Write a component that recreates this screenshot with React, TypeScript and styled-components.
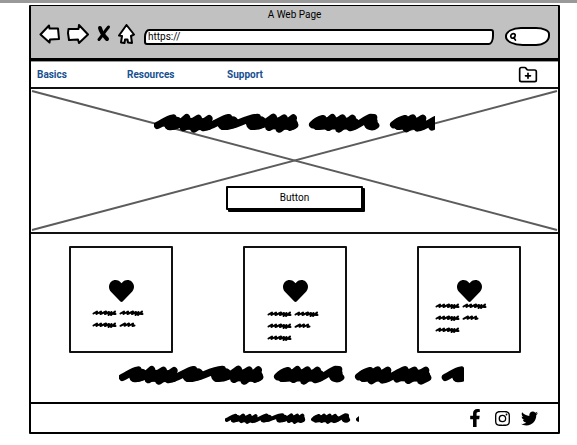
import React from "react";
import styled, { createGlobalStyle } from "styled-components";
import { FaHeart, FaFacebookF, FaTwitter } from "react-icons/fa";
import { BsInstagram } from "react-icons/bs";
import { FolderPlus } from "lucide-react";

const GlobalStyle = createGlobalStyle`
  * { box-sizing: border-box; }
  body {
    margin: 0;
    background: #fff;
    color: #000;
    font-family: Roboto, "Liberation Sans", sans-serif;
    font-size: 10px;
    line-height: 16px;
  }
`;

const Page = styled.div`
  border-top: 3px solid #999;
  padding: 2px 17px 11px 29px;
`;

const Frame = styled.div`
  border: 2px solid #000;
  border-top-width: 1px;
  border-radius: 1px;
`;

const Chrome = styled.header`
  background: #c1c1c1;
  border-bottom: 2px solid #000;
  padding-bottom: 9px;
`;

const Title = styled.h1`
  margin: 0;
  font-size: 10px;
  line-height: 18px;
  font-weight: 400;
  text-align: center;
`;

const Toolbar = styled.div`
  display: flex;
  align-items: center;
  gap: 7px;
  height: 25px;
  padding: 0 8px 0 8px;
`;

const IconButton = styled.button`
  display: flex;
  flex: none;
  margin: 0 0 6px;
  padding: 0;
  border: 0;
  background: none;
  color: #000;
`;

const Address = styled.input`
  flex: 1;
  min-width: 0;
  height: 16px;
  margin: 0 4px 0 2px;
  padding: 0 2px;
  border: 2px solid #000;
  border-radius: 5px 3px 5px 3px / 8px 3px 9px 3px;
  background: #fff;
  color: #000;
  font: inherit;
`;

const Search = styled.label`
  display: flex;
  align-items: center;
  flex: none;
  width: 45px;
  height: 19px;
  padding-left: 2px;
  border: 2px solid #000;
  border-radius: 16px 14px 14px 18px / 9px 7px 10px 9px;
  background: #fff;
`;

const SearchInput = styled.input`
  width: 100%;
  min-width: 0;
  padding: 0;
  border: 0;
  outline: 0;
  background: none;
  font: inherit;
`;

const Nav = styled.nav`
  display: grid;
  grid-template-columns: 90px 100px 1fr auto;
  align-items: center;
  height: 29px;
  padding: 2px 20px 0 6px;
  border-top: 1px solid #000;
  border-bottom: 2px solid #111;
  box-shadow: inset 0 1px #999;
`;

const NavLink = styled.a`
  color: #17508f;
  font-weight: 700;
  text-decoration: none;
`;

const FolderButton = styled(IconButton)`
  margin: 0;
`;

const Hero = styled.section`
  position: relative;
  display: flex;
  flex-direction: column;
  align-items: center;
  gap: 53px;
  padding: 24px 0 22px;
  border-bottom: 2px solid #111;
`;

const Cross = styled.svg`
  position: absolute;
  inset: 0;
  width: 100%;
  height: 100%;
`;

const HeroHeading = styled.div`
  position: relative;
  display: flex;
`;

const HeroButton = styled.button`
  position: relative;
  width: 137px;
  height: 24px;
  padding: 0;
  border: 2px solid #000;
  border-radius: 1px;
  background: #fff;
  box-shadow: 2px 2px #000;
  color: #000;
  font: inherit;
`;

const Cards = styled.main`
  display: flex;
  justify-content: space-between;
  padding: 12px 37px 12px 38px;
`;

const Card = styled.article<{ $inset: number; $gap: number }>`
  width: 104px;
  height: 107px;
  padding: 32px 0 0 ${(p) => p.$inset}px;
  border: 2px solid #111;
  border-radius: 1px;
  display: flex;
  flex-direction: column;
  align-items: flex-start;
  gap: ${(p) => p.$gap}px;
`;

const Heart = styled(FaHeart)<{ $indent: number }>`
  margin-left: ${(p) => p.$indent}px;
  flex: none;
  width: 25px;
  height: 22px;
`;

const Tagline = styled.section`
  display: flex;
  justify-content: center;
  padding: 0 6px 17px 0;
`;

const Footer = styled.footer`
  display: grid;
  grid-template-columns: 1fr auto 1fr;
  align-items: center;
  height: 30px;
  border-top: 2px solid #000;
`;

const FooterText = styled.div`
  grid-column: 2;
  display: flex;
  padding-right: 6px;
`;

const Social = styled.div`
  display: flex;
  justify-content: flex-end;
  align-items: center;
  gap: 11px;
  padding-right: 20px;
`;

const SocialLink = styled.a`
  display: flex;
  color: #000;
`;

const WORDS = [
  {
    x: 0,
    d: "M10 37 C25 31 38 18 57 15 L44 40 C62 43 76 34 98 14 L88 44 L133 16 L120 48 L165 17 L148 44 C178 40 200 19 224 14 L206 40 C238 44 270 16 310 13 L293 40 C322 43 340 26 358 13 L345 43 L390 15 L376 48 L418 15 L408 43 L422 36",
    body: "M48 33 L68 29 M90 32 L160 34 M208 32 L236 28 M294 32 L320 28 M350 31 L414 33",
  },
  {
    x: 465,
    d: "M11 35 C18 28 30 20 42 17 L24 40 C42 41 55 28 70 14 L58 43 L100 15 L90 48 L130 16 L124 44 C144 41 166 20 184 13 L194 14 L180 39 C188 43 196 40 200 37",
    body: "M26 33 L60 31 L134 32 M182 31 L188 26",
  },
  {
    x: 708,
    d: "M11 35 C20 28 32 20 45 17 L24 40 L68 15 L49 47 L98 16 L82 45 C108 41 126 22 150 14 L126 42 L178 16 L160 46 L212 16 L198 48 L218 38",
    body: "M26 33 L48 31 L94 33 M134 31 L208 32",
  },
  {
    x: 969,
    d: "M10 37 C25 31 38 18 57 15 L44 40 C62 43 76 34 98 14",
    body: "M48 33 L68 29",
  },
];

function Scribble({ width, height, units }: { width: number; height: number; units: number }) {
  return (
    <svg width={width} height={height} viewBox={`0 0 ${units} 60`} preserveAspectRatio="xMinYMid slice" fill="none" stroke="#000" strokeLinecap="round" strokeLinejoin="round" aria-hidden="true">
      {WORDS.map((w) => (
        <g key={w.x} transform={`translate(${w.x} 0)`}>
          <path d={w.d} strokeWidth="22" />
          <path d={w.body} strokeWidth="36" />
        </g>
      ))}
    </svg>
  );
}

const LONG = "M1.5 4.5 L5 2.5 L4.5 5 L9 2.5 L8.5 5 L14 2.5 L13 5 L17 3 L16.5 6 L19.5 3 L19 6 L23 2.5 L22 5 L23.5 5";
const SHORT = "M1.5 4.8 L6 2.5 L5.5 4.8 L10 2.5 L9.5 5 L14 2.5 L13.5 5 L15.5 4.5";

function Lines({ rows }: { rows: number }) {
  return (
    <svg width="52" height={rows * 12 - 4} fill="none" stroke="#000" strokeWidth="2" strokeLinecap="round" strokeLinejoin="round" aria-hidden="true">
      <path d={LONG} />
      <path d={LONG} transform="translate(27 0)" />
      <path d={LONG} transform="translate(0 12)" />
      <path d={SHORT} transform="translate(27 12)" />
      {rows > 2 && <path d={LONG} transform="translate(0 24)" />}
    </svg>
  );
}

const outline = { fill: "#fff", stroke: "#000", strokeWidth: 2, strokeLinejoin: "round" as const, strokeLinecap: "round" as const };

const CARDS = [
  { rows: 2, inset: 21, indent: 17, gap: 7 },
  { rows: 3, inset: 22, indent: 16, gap: 8 },
  { rows: 3, inset: 16, indent: 22, gap: 0 },
];

export default function App() {
  return (
    <>
      <GlobalStyle />
      <Page>
        <Frame>
          <Chrome>
            <Title>A Web Page</Title>
            <Toolbar>
              <IconButton aria-label="Back">
                <svg width="21" height="20" viewBox="0 0 21 20"><path {...outline} d="M1.5 10.5 L10 1.5 L10.5 4.5 L19 4.5 L20 15 L11 15.5 L10.5 18.5 Z" /></svg>
              </IconButton>
              <IconButton aria-label="Forward">
                <svg width="22" height="20" viewBox="0 0 22 20"><path {...outline} d="M21 10.5 L12 1 L11.5 5 L1.5 5 L1 9 L2 16 L11 15.5 L12 19 Z" /></svg>
              </IconButton>
              <IconButton aria-label="Stop">
                <svg width="15" height="20" viewBox="0 0 15 20" fill="none" stroke="#000" strokeLinecap="round"><path strokeWidth="4" d="M4 4 C5 8 8 12 11 15" /><path strokeWidth="3" d="M12.5 3 C9 7 6 12 3 15.5" /></svg>
              </IconButton>
              <IconButton aria-label="Home">
                <svg width="17" height="20" viewBox="0 0 17 20"><path {...outline} d="M8.5 1 L16 10.5 L13 12 L14 19 L10 18.5 L9.5 15.5 L7 15.5 L6.5 19 L3 18.5 L4 12 L1 11.5 Z" /></svg>
              </IconButton>
              <Address aria-label="Address" defaultValue="https://" />
              <Search aria-label="Search">
                <svg width="11" height="12" viewBox="0 0 10 11" fill="none" stroke="#000" strokeWidth="2" strokeLinecap="round"><path d="M2.5 6 C1 4 3 1.5 5 1.5 C8 1.5 8 5.5 5 6.5 C4 6.8 3 6.8 2.5 6 Z M6 7 L7.5 9" /></svg>
                <SearchInput type="text" />
              </Search>
            </Toolbar>
          </Chrome>
          <Nav>
            <NavLink href="#basics">Basics</NavLink>
            <NavLink href="#resources">Resources</NavLink>
            <NavLink href="#support">Support</NavLink>
            <FolderButton aria-label="Add folder"><FolderPlus size={20} strokeWidth={2} /></FolderButton>
          </Nav>
          <Hero>
            <Cross viewBox="0 0 527 143" preserveAspectRatio="none" stroke="#5c5c5c" strokeWidth="2" aria-hidden="true">
              <path d="M1 2 L526 141 M526 2 L1 141" />
            </Cross>
            <HeroHeading><Scribble width={281} height={20} units={843} /></HeroHeading>
            <HeroButton>Button</HeroButton>
          </Hero>
          <Cards>
            {CARDS.map((c, i) => (
              <Card key={i} $inset={c.inset} $gap={c.gap}>
                <Heart viewBox="0 32 512 448" preserveAspectRatio="none" $indent={c.indent} />
                <Lines rows={c.rows} />
              </Card>
            ))}
          </Cards>
          <Tagline><Scribble width={345} height={20} units={1035} /></Tagline>
          <Footer>
            <FooterText><Scribble width={134} height={11} units={724} /></FooterText>
            <Social>
              <SocialLink href="#facebook" aria-label="Facebook"><FaFacebookF size={18} /></SocialLink>
              <SocialLink href="#instagram" aria-label="Instagram"><BsInstagram size={15} /></SocialLink>
              <SocialLink href="#twitter" aria-label="Twitter"><FaTwitter size={17} /></SocialLink>
            </Social>
          </Footer>
        </Frame>
      </Page>
    </>
  );
}
